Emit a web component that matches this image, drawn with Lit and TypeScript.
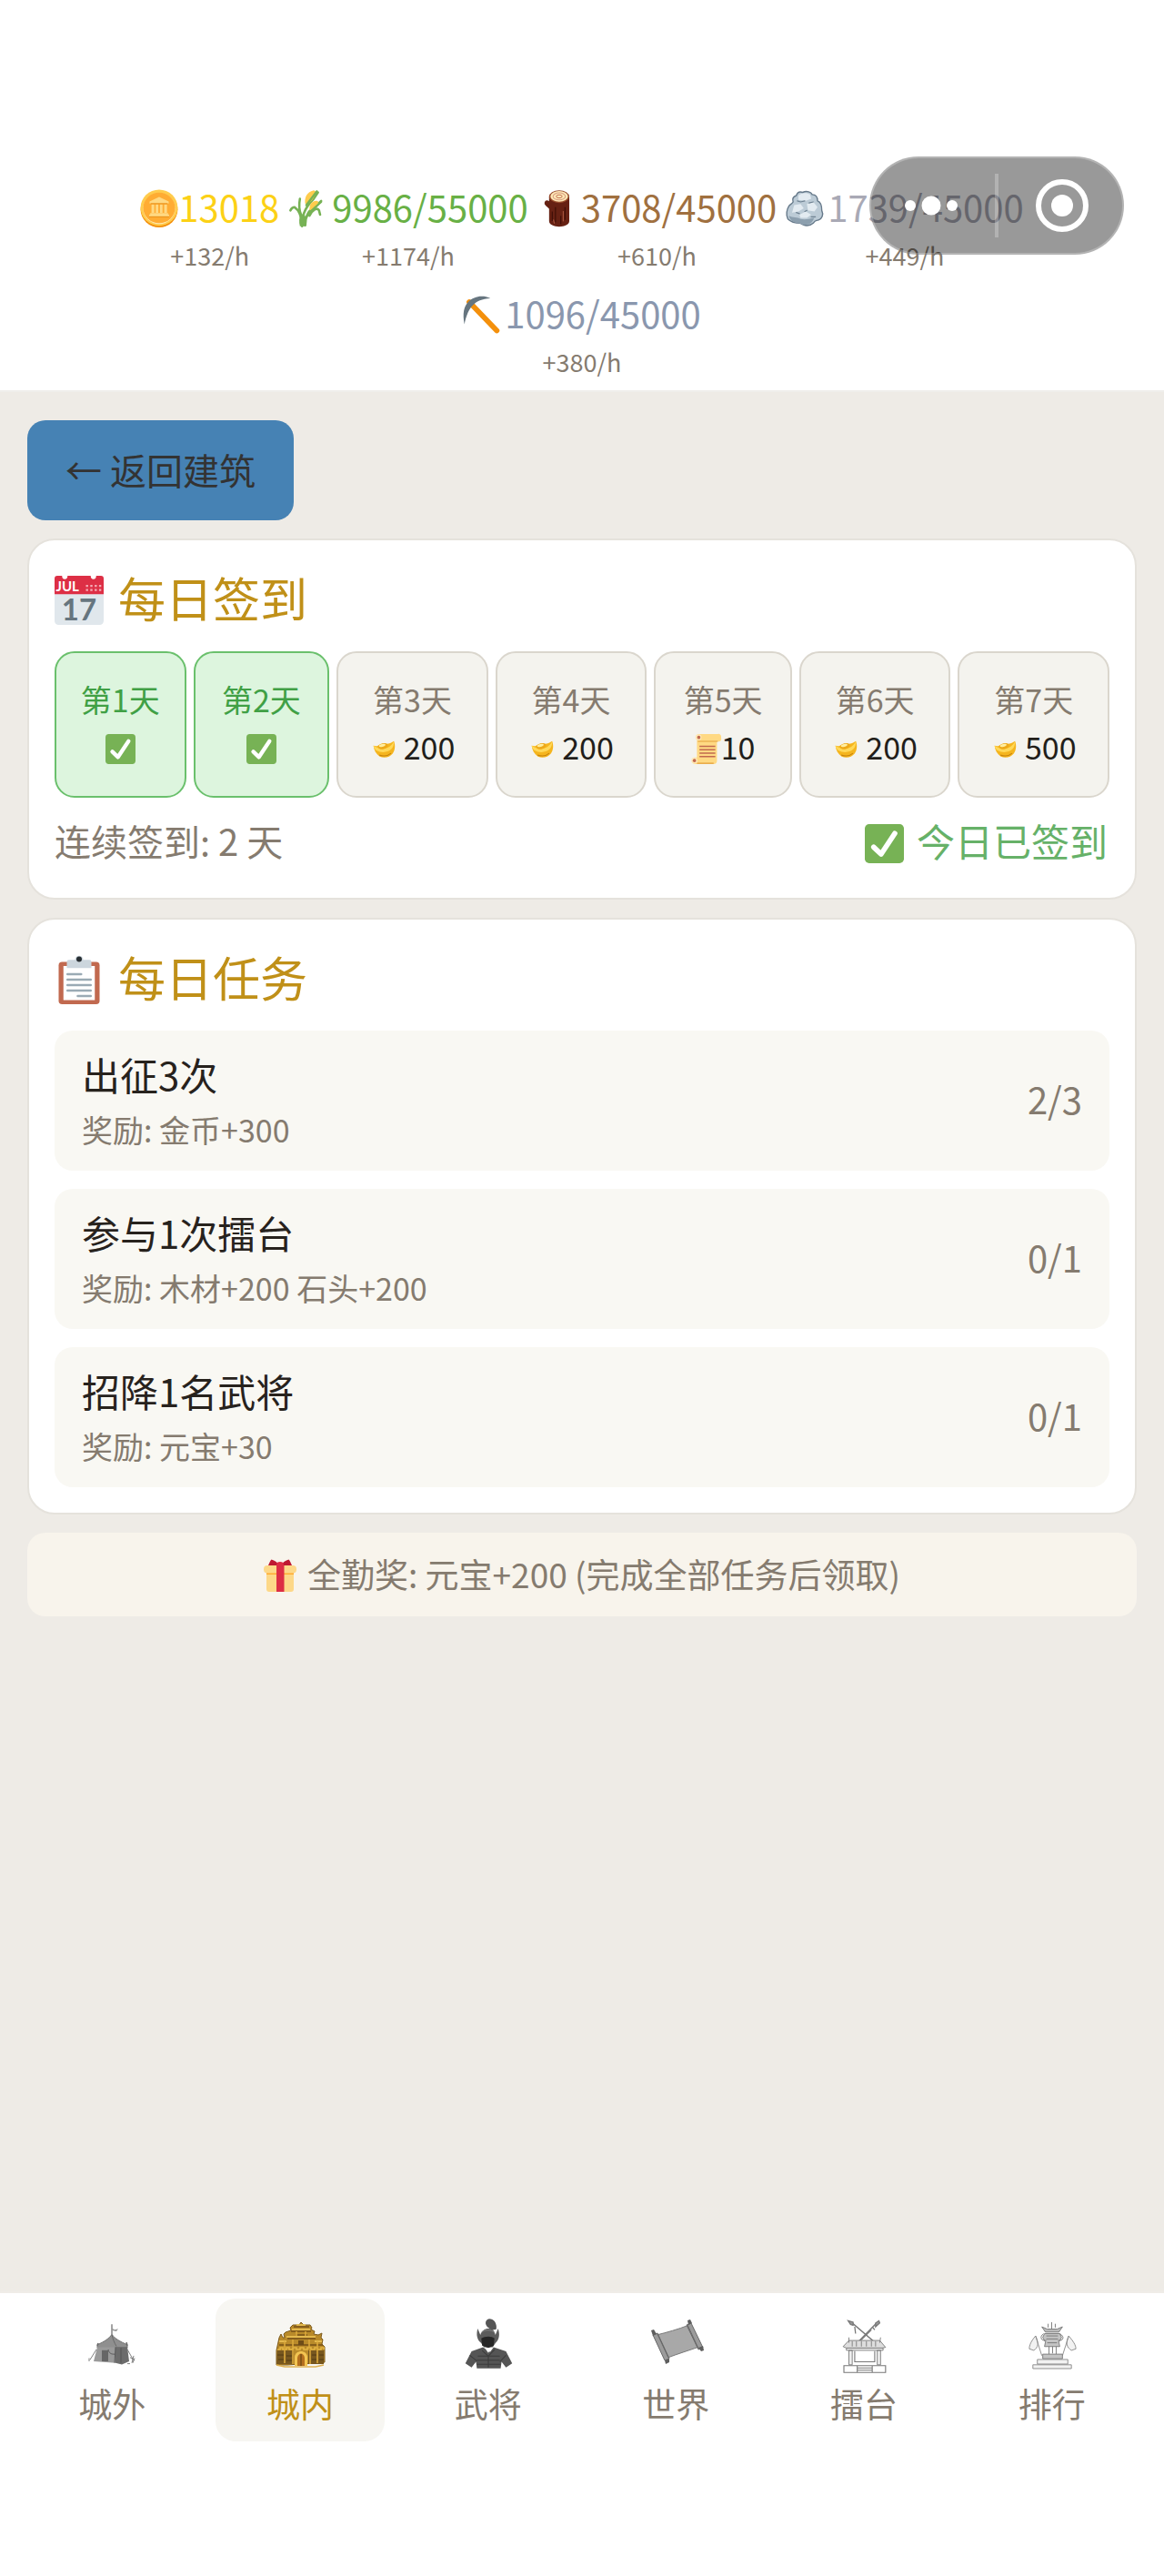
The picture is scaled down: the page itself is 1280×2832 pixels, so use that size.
import { LitElement, css, html, svg, nothing } from 'lit';
import { customElement, property, state } from 'lit/decorators.js';
import { classMap } from 'lit/directives/class-map.js';

const check = svg`
  <rect width="36" height="36" rx="4" fill="#77b255" />
  <path d="M8.2 21.2 15 27.6 27.6 8.6" fill="none" stroke="#fff" stroke-width="4.8" stroke-linecap="round" stroke-linejoin="round" />
`;

const coin = svg`
  <ellipse cx="18" cy="19" rx="17.5" ry="17" fill="#f4900c" />
  <ellipse cx="18" cy="17.4" rx="17.5" ry="17" fill="#ffcc4d" />
  <ellipse cx="18" cy="18.2" rx="15" ry="14.6" fill="#ffe8b6" />
  <ellipse cx="18" cy="17.6" rx="15" ry="14.4" fill="#ffac33" />
  <path d="M18 7.2 9 11.6v1.8h18v-1.8zM10.8 14.3h2.6v8h-2.6zm4 0h2.4v8h-2.4zm4 0h2.4v8h-2.4zm4 0h2.6v8h-2.6zM9.6 22.4h16.8v1.4h1v2.2H8.6v-2.2h1z" fill="#ffd983" />
  <path d="M8.6 26h18.8M10 13.6h16" stroke="#e58a12" stroke-width=".8" />
`;

const wheat = svg`
  <path d="M13 35c0-8 1-16 11-26l4-6M16 34c0-9 4-15 10-18l5-5M13 32c-1-9-4-13-7-15-2 0-3 1-4 3M12 24c-2-5-2-10-1-15M20 25c3-6 7-8 9-5l1 4" fill="none" stroke="#77b255" stroke-width="2.2" stroke-linecap="round" />
  <path d="M16 14c-1-6 1-11 8-13 3 1 2 3 1 5-2 4-4 7-9 8z" fill="#ffcc4d" />
  <path d="M20 20c0-5 1-8 6-9 3 0 3 2 1 4-1 3-4 4-7 5z" fill="#ffcc4d" />
  <path d="m17 15 10-13M21 21l10-9" fill="none" stroke="#77b255" stroke-width="2" stroke-linecap="round" />
  <path d="M11 35c-1-4-1-8 1-12l5 3c-1 3-1 6-1 9z" fill="#77b255" />
`;

const log = svg`
  <path d="M12 18 8.4 14.6c-1.6-1.4-.6-3.2.8-3 1.8.2 2 2.4 3.8 4.4z" fill="#662113" stroke="#662113" stroke-width="2" stroke-linejoin="round" />
  <path d="M11 7v23c0 7 19 7 19 0V7z" fill="#662113" />
  <path d="M14 21v9M17 17v14M22 25v8M26 17v12" stroke="#3f0f07" stroke-width="1" />
  <path d="M24.3 21v9M15.2 29l.6 3" stroke="#c1694f" stroke-width=".7" stroke-linecap="round" />
  <ellipse cx="20.5" cy="7" rx="9.5" ry="6" fill="#974b2c" />
  <ellipse cx="20.5" cy="6.8" rx="8.3" ry="5" fill="#ffe8b6" />
  <ellipse cx="20.5" cy="6.8" rx="5.8" ry="3.3" fill="none" stroke="#d99e82" stroke-width=".9" />
  <ellipse cx="20.5" cy="6.8" rx="2.8" ry="1.5" fill="none" stroke="#c1694f" stroke-width=".8" />
`;

const stone = svg`
  <path d="M10 6c1-3 3-4 6-3 4-2 8 0 9 2 4 0 5 3 5 6 3 1 4 5 4 9 2 4 0 8-3 9-3 1-3 0-5 3-3 3-9 3-12 0-5 0-9-1-12-4-2-4-1-9 1-12 1-2 3-2 4-4-1-3 0-5 3-6z" fill="#bccbd6" stroke="#66798a" stroke-width="1.2" stroke-linejoin="round" />
  <path d="M12 6c3-3 8-3 11-1l1 4-5 2-7-1zM8 15l6-1 3 4-5 3-6 1zM20 14l6-2 4 5-3 4-6-1zM13 24l6-3 5 3-4 3-6 0z" fill="#e3ebf1" />
  <path d="M3 25c4 2 8 1 11 3 4 1 8 0 13-1-2 4-3 5-5 6-4 1-7 1-9-1-4 0-9-2-10-7z" fill="#8c9fae" />
  <path d="m11 11 3 1 4-1M26 12l-4 1M10 22l3 1M20 20l-2 1M24 26l4 0" fill="none" stroke="#6f8292" stroke-width="1" stroke-linecap="round" />
`;

const pickaxe = svg`
  <path d="m6 6 26 27" stroke="#f4900c" stroke-width="5" stroke-linecap="round" />
  <path d="M1.5 27C-.5 17 1 10 5 6 10 1 18-1 26 2.5 18 3 13 5 9.5 9 6 12 3 19 1.5 27z" fill="#66757f" />
`;

const calendar = svg`
  <path d="M0 10h36v23a3 3 0 0 1-3 3H3a3 3 0 0 1-3-3z" fill="#e0e7ec" />
  <path d="M2 0h3.5a2 2.5 0 0 0 4 0h17a2 2.5 0 0 0 4 0H34a2 2 0 0 1 2 2v11.5H0V2a2 2 0 0 1 2-2z" fill="#dd2f45" />
  <text x="1" y="11.4" font-size="10" font-weight="700" font-family="Lato, sans-serif" fill="#fff">JUL</text>
  <path d="M23 7.4h12M23 10.4h12" stroke="#f5abb5" stroke-width="1.6" stroke-dasharray="1.6 1.6" />
  <text x="18" y="32.4" text-anchor="middle" font-size="22" font-weight="700" font-family="Lato, sans-serif" fill="#66757f">17</text>
`;

const clipboard = svg`
  <rect x="3" y="5" width="30" height="31" rx="2.5" fill="#c1694f" />
  <path d="M6.500 8h23v25h-23z" fill="#fff" />
  <path d="M9 5a1.500 1.500 0 0 1 1.500-1.500H15a3 3 0 0 1 6 0h4.500A1.500 1.500 0 0 1 27 5v4.500H9z" fill="#ccd6dd" />
  <circle cx="18" cy="3" r="2" fill="#292f33" />
  <path d="M9.500 14h10M9.500 18h17M9.500 22h17M9.500 26h17M17 30h9.500" stroke="#9aaab4" stroke-width="1.700" stroke-linecap="round" />
`;

const scroll = svg`
  <path d="M32 0H8a3.500 3.500 0 0 0-1 2v26H4a4 4 0 0 0-3 4 4 4 0 0 0 4 4h22a4 4 0 0 0 4-4V9h2a3 3 0 0 0 3-4V3a3 3 0 0 0-4-3z" fill="#ffd983" />
  <path d="M8 8.800h24M7 35h20" stroke="#e39f3d" stroke-width="1.200" />
  <circle cx="8.800" cy="4" r="3.600" fill="#ffe8b6" />
  <circle cx="4" cy="31.800" r="3.600" fill="#ffe8b6" />
  <circle cx="9.200" cy="4" r="2" fill="#c1694f" />
  <circle cx="4" cy="31.800" r="2" fill="#c1694f" />
  <path d="M10 14.800h19M10 18.800h19M10 23h19M10 27h19" stroke="#c1694f" stroke-width="1.700" />
`;

const gift = svg`
  <path d="M3 14h30v19a3 3 0 0 1-3 3H6a3 3 0 0 1-3-3z" fill="#fdd888" />
  <path d="M3 15h30v2H3z" fill="#ffac33" />
  <rect y="7" width="36" height="8.500" rx="4" fill="#fdd888" />
  <path d="M14 5h8.500v31H14z" fill="#dd2e44" />
  <path d="M17 7c-2-4-5-5.500-8.500-6.500C7 2 6 4.500 5 7zM19 7c2-4 5-5.500 8.500-6.500C29 2 30 4.500 31 7z" fill="#be1931" />
  <ellipse cx="18" cy="6" rx="4" ry="3" fill="#dd2e44" />
`;

// the gold ingot only fills the middle of its box
const ingot = svg`
  <path d="M4 14c2 .5 3 .7 5 .3 2-2 7-3.500 11-2.600 2.500 0 5.500-1 8.500-3.200 2 5 1.500 11-1.500 15-3.500 4.500-10 6-15.500 3.500C7 24 4.500 19 4 14z" fill="#f5b51e" />
  <path d="M4 14c5 3 8 4 12 3.600 5-.8 9.500-3 12.500-9 .5 3-1 7.500-3 9.500-4 4-12 5-18 1.500-2-1-3-3-3.500-5.600z" fill="#ffd858" />
  <ellipse cx="15.500" cy="14.600" rx="6" ry="3.400" transform="rotate(-14 15.500 14.600)" fill="#eea918" />
  <ellipse cx="14.500" cy="13.600" rx="4" ry="1.700" transform="rotate(-14 14.500 13.600)" fill="#ffed9e" />
  <path d="M11 25c5 2 10 1.500 14-2" fill="none" stroke="#c8830c" stroke-width="1.200" />
`;

const tent = svg`
  <path d="M33 11v13" stroke="#666" stroke-width="1.2" />
  <path d="m33 16 3 2 4-1-2 3-5-1z" fill="#999" />
  <path d="M33 24c-3 5-8 9-16 13v4h33v-4c-8-4-14-8-17-13z" fill="#8f8f8f" stroke="#6b6b6b" />
  <path d="m17 38 1-3M50 38l-1-4" stroke="#666" stroke-width="1.5" />
  <path d="M17 40h21l-1 20-24-2z" fill="#9a9a9a" />
  <path d="M37 40h13l2 18-8 4-7-2z" fill="#6c6c6c" />
  <path d="M33 24c1 6 3 11 5 15" fill="none" stroke="#666" />
  <path d="M22 44h7v14h-7z" fill="#666" />
  <path d="M29 43c1 5 3 6 7 6M37 40l-1 20M43 41v19" fill="none" stroke="#555" />
  <path d="m16 43-7 13M50 43l6 12M8 54v4M53 53l5 4M55 60l2-9M50 61h3M58 54l-2 6" stroke="#777" />
`;

const fortress = svg`
  <path d="M7 57V41l3-14 2-4 2 4h2l-1-4 2-2 6-2-1-3 3-3h7l2-3 3 3h7l2 3-1 2 4 2-1 3 5 1 4-2-1 5 2 2-1 5 3 3v17l-8 1-18 1-15 1z" fill="#b98a2a" stroke="#7d5a1c" />
  <path d="M8 41h18v15H7zM42 41h17v15H42z" fill="#77571f" />
  <path d="M23 20h22M19 28h31M26 15h17M10 35h48M28 24h13" stroke="#765019" stroke-width="1.3" />
  <path d="M24 18h20M18 26h32M29 13h10M10 31h8M49 31h8" stroke="#f2c95a" stroke-width="1.5" />
  <path d="M8 40h3v-2h3v2h4v-2h3v2h4v-2h4v2h4v-2h4v2h4v-2h4v2h4v-2h3v2h4v-2h3v2" fill="none" stroke="#e3b443" stroke-width="1.6" />
  <path d="M25 40v16M44 40v16M16 31v24M52 31v24M25 29v8M43 29v8M29 20v5M39 20v5" stroke="#dba93b" stroke-width="1.6" />
  <path d="M31 30h6v5h-6z" fill="#6e4c17" />
  <path d="M27 58V48c1-8 13-8 14 0v10z" fill="#f3c552" />
  <path d="M30 58V49c1-6 7-6 8 0v9z" fill="#b5701f" />
  <path d="M34 45v13M8 46h7M9 51h6M18 47h6M18 52h6M46 46h5M46 51h5M54 46h5M54 51h5" stroke="#4f3812" stroke-width=".9" />
  <path d="m7 57 9 2 18 0 16 0 9-2" fill="none" stroke="#e0b354" stroke-width="1.6" />
`;

const general = svg`
  <path d="M33 17c-3-3-3-9 2-10 5 0 9 5 8 13l-5 1z" fill="#555" />
  <path d="M22 19c-2 7-1 14 4 18l3 5h10l3-5c5-5 5-12 3-18l-3 8c-1-6-4-8-8-8s-8 3-9 8z" fill="#5c5c5c" />
  <path d="M26 31c4-3 12-3 15 0l-1 9-6 3-7-3z" fill="#262626" />
  <path d="M28 42 15 47 8 62l7 5 5-7 1 8h27l1-8 5 7 7-5-7-15-14-5-4 6z" fill="#555" />
  <path d="m30 43 4 6 3-6z" fill="#fff" />
  <path d="M22 53h25M21 58h26M21 63h27M27 46l7 7 7-8M34 52v15M13 52l8 7M54 52l-7 8" fill="none" stroke="#3c3c3c" stroke-width="1.2" />
  <path d="M26 24c3-4 12-4 15 0" fill="none" stroke="#888" />
`;

const map = svg`
  <path d="M12 24c12-3 23-6 36-11l11 24c-12 4-24 8-35 12z" fill="#a8a8a8" stroke="#7a7a7a" />
  <path d="m8 24 5-2 13 28-5 2zM45 13l5-2 13 27-5 2z" fill="#9b9b9b" stroke="#686868" stroke-linejoin="round" />
  <path d="m13 23 12 26M46 13l12 26" stroke="#666" />
  <path d="m6 19 3-1 3 5-4 2zM21 52l5-2 0 4-4 2zM46 8l3-1 2 4-4 2zM58 38l5-2 1 5-3 1z" fill="#5e5e5e" />
`;

const arena = svg`
  <path d="m20 8 34 32M53 8 28 36" stroke="#777" stroke-width="1.6" />
  <path d="m17 7 6 2v4l-3-1zM50 10l4-3 1 3-5 5zM25 15l1 9M46 15l3 4M32 33l13-14" stroke="#777" stroke-width="1.4" fill="#999" />
  <path d="M18 33h37l7 9-4 1H15l-4-2z" fill="#ddd" stroke="#777" />
  <path d="M18 36v-7M55 36l1-7M22 34v7M27 34v7M33 34v7M39 34v7M45 34v7M50 34v7" stroke="#777" />
  <path d="M15 43h44v3H15zM18 46h4v19h-4zM52 46h4v19h-4z" fill="#eee" stroke="#777" />
  <path d="M25 47v14h24V47M12 66h50v9H12zM28 66v9M46 66v9M28 69h18M28 72h18" fill="none" stroke="#777" stroke-width="1.2" />
`;

const statue = svg`
  <path d="M32 8v9M28 10v5M36 10v5M21 14l6 3h11l6-3-4 7H25z" fill="#bbb" stroke="#777" />
  <path d="M24 23h17l2 5-3 6 1 6H24l1-6-3-6z" fill="#c4c4c4" stroke="#777" />
  <path d="M23 23c-5 4-3 10 3 9M41 23c6 4 4 10-2 9M26 26h13M26 30h13M27 35h11M29 40v10M37 40v10M33 40v9" fill="none" stroke="#777" />
  <path d="M14 26c-5 7-7 12-7 17l5 2c5-4 6-9 2-19zl7 26M51 26c5 7 8 12 8 17l-5 2c-5-4-7-9-3-19zl-7 26" fill="#f2f2f2" stroke="#888" />
  <path d="M22 50h22v6H22z" fill="#c4c4c4" stroke="#777" />
  <path d="M16 57h34v6H16zM11 64h43v5H11z" fill="#f2f2f2" stroke="#888" />
`;

const emoji: Record<string, unknown> = {
  check, coin, wheat, log, stone, pickaxe, calendar, clipboard, scroll, gift, ingot,
};

const pictures: Record<string, unknown> = { tent, fortress, general, map, arena, statue };

@customElement('emoji-icon')
export class EmojiIcon extends LitElement {
  @property() name = '';

  static styles = css`
    :host {
      display: inline-flex;
      flex: none;
    }

    svg {
      width: 100%;
      height: 100%;
      overflow: visible;
    }
  `;

  render() {
    return html`<svg viewBox="0 0 36 36" aria-hidden="true">${emoji[this.name]}</svg>`;
  }
}

@customElement('resource-bar')
export class ResourceBar extends LitElement {
  private resources = [
    { id: 'gold', icon: 'coin', value: '13018', rate: '+132/h' },
    { id: 'food', icon: 'wheat', value: '9986/55000', rate: '+1174/h' },
    { id: 'wood', icon: 'log', value: '3708/45000', rate: '+610/h' },
    { id: 'rock', icon: 'stone', value: '1739/45000', rate: '+449/h' },
    { id: 'iron', icon: 'pickaxe', value: '1096/45000', rate: '+380/h' },
  ];

  static styles = css`
    :host {
      display: block;
      position: relative;
      padding: 197px 120px 7px;
      border-bottom: 2px solid #efeeeb;
      background: #ffffff;
    }

    .list {
      display: flex;
      flex-wrap: wrap;
      justify-content: center;
      gap: 9px 10px;
      margin: 0;
      padding: 0;
      list-style: none;
    }

    .item {
      text-align: center;
    }

    .value {
      display: flex;
      align-items: center;
      justify-content: center;
      font-size: 40px;
      line-height: 60px;
    }

    emoji-icon {
      width: 42px;
      height: 42px;
      margin-top: 4px;
    }

    .food emoji-icon,
    .wood emoji-icon {
      margin-right: 6px;
    }

    .rock emoji-icon,
    .iron emoji-icon {
      margin-right: 4px;
    }

    .rate {
      color: #857b6f;
      font-size: 27px;
      line-height: 48px;
    }

    .gold .value {
      color: #fcd116;
    }

    .food .value {
      color: #68b045;
    }

    .wood .value {
      color: #a0703f;
    }

    .rock .value {
      color: #a9a9b5;
    }

    .iron .value {
      color: #8a97ae;
    }

    .capsule {
      position: absolute;
      top: 172px;
      right: 44px;
      display: flex;
      align-items: center;
      box-sizing: border-box;
      width: 280px;
      height: 108px;
      border: 2px solid rgba(255, 255, 255, 0.25);
      border-radius: 54px;
      background: rgba(0, 0, 0, 0.4);
    }

    .capsule button {
      display: flex;
      flex: 1;
      align-items: center;
      justify-content: center;
      height: 100%;
      padding: 0;
      border: 0;
      background: none;
      cursor: pointer;
    }

    .capsule .more {
      padding-right: 4px;
    }

    .capsule .close {
      padding-left: 4px;
    }

    .capsule svg {
      width: 60px;
      height: 60px;
      fill: #ffffff;
    }

    .divider {
      width: 4px;
      height: 70px;
      background: rgba(255, 255, 255, 0.25);
    }
  `;

  render() {
    return html`
      <ul class="list">
        ${this.resources.map(
          (item) => html`
            <li class="item ${item.id}">
              <div class="value"><emoji-icon name=${item.icon}></emoji-icon>${item.value}</div>
              <div class="rate">${item.rate}</div>
            </li>
          `,
        )}
      </ul>
      <div class="capsule">
        <button class="more" type="button" aria-label="更多">
          <svg viewBox="0 0 60 60">
            <circle cx="7" cy="30" r="6" />
            <circle cx="30" cy="30" r="10.5" />
            <circle cx="53" cy="30" r="6" />
          </svg>
        </button>
        <span class="divider"></span>
        <button class="close" type="button" aria-label="关闭">
          <svg viewBox="0 0 60 60">
            <circle cx="30" cy="30" r="26" fill="none" stroke="#fff" stroke-width="6" />
            <circle cx="30" cy="30" r="12" />
          </svg>
        </button>
      </div>
    `;
  }
}

// shared by the two white cards
const cardStyles = css`
  :host {
    display: block;
    padding: 28px;
    border: 2px solid #e5e2dc;
    border-radius: 30px;
    background: #ffffff;
  }

  h2 {
    display: flex;
    align-items: center;
    gap: 16px;
    margin: 0 0 24px;
    color: #c09018;
    font-size: 52px;
    font-weight: 400;
    line-height: 70px;
  }

  h2 emoji-icon {
    width: 54px;
    height: 54px;
    margin-top: 6px;
  }
`;

@customElement('sign-in-card')
export class SignInCard extends LitElement {
  private days = [
    { label: '第1天', done: true },
    { label: '第2天', done: true },
    { label: '第3天', icon: 'ingot', amount: 200 },
    { label: '第4天', icon: 'ingot', amount: 200 },
    { label: '第5天', icon: 'scroll', amount: 10 },
    { label: '第6天', icon: 'ingot', amount: 200 },
    { label: '第7天', icon: 'ingot', amount: 500 },
  ];

  static styles = [
    cardStyles,
    css`
      .days {
        display: grid;
        grid-template-columns: 145fr 150fr 167fr 167fr 152fr 167fr 167fr;
        gap: 8px;
        margin: 0;
        padding: 0;
        list-style: none;
      }

      .day {
        padding: 26px 0 27px;
        border: 2px solid #dad6cd;
        border-radius: 22px;
        background: #f4f3ee;
        color: #857b6f;
        font-size: 34px;
        line-height: 50px;
        text-align: center;
      }

      .done {
        border-color: #6ac06c;
        background: #ddf5de;
        color: #40a045;
      }

      .reward {
        display: flex;
        align-items: center;
        justify-content: center;
        color: #221e1a;
        line-height: 54px;
        min-height: 54px;
      }

      .reward emoji-icon {
        width: 33px;
        height: 33px;
        margin-top: 4px;
      }

      .ingot emoji-icon {
        margin-right: 4px;
      }

      .footer {
        display: flex;
        justify-content: space-between;
        margin-top: 12px;
        color: #857b6f;
        font-size: 40px;
        line-height: 70px;
      }

      .signed {
        display: flex;
        align-items: center;
        gap: 14px;
        padding-right: 2px;
        color: #66b168;
        font-size: 42px;
      }

      .signed emoji-icon {
        width: 43px;
        height: 43px;
        margin-top: 6px;
      }
    `,
  ];

  render() {
    return html`
      <h2><emoji-icon name="calendar"></emoji-icon>每日签到</h2>
      <ol class="days">
        ${this.days.map(
          (day) => html`
            <li class=${classMap({ day: true, done: !!day.done })}>
              <div>${day.label}</div>
              <div class="reward ${day.icon ?? ''}">
                <emoji-icon name=${day.icon ?? 'check'}></emoji-icon>${day.amount ?? nothing}
              </div>
            </li>
          `,
        )}
      </ol>
      <div class="footer">
        <span>连续签到: 2 天</span>
        <span class="signed"><emoji-icon name="check"></emoji-icon>今日已签到</span>
      </div>
    `;
  }
}

@customElement('task-card')
export class TaskCard extends LitElement {
  private tasks = [
    { name: '出征3次', reward: '奖励: 金币+300', progress: '2/3' },
    { name: '参与1次擂台', reward: '奖励: 木材+200 石头+200', progress: '0/1' },
    { name: '招降1名武将', reward: '奖励: 元宝+30', progress: '0/1' },
  ];

  static styles = [
    cardStyles,
    css`
      .tasks {
        display: flex;
        flex-direction: column;
        gap: 20px;
        margin: 0;
        padding: 0;
        list-style: none;
      }

      .task {
        display: flex;
        align-items: center;
        justify-content: space-between;
        padding: 16px 30px;
        border-radius: 20px;
        background: #f9f8f3;
        color: #857b6f;
      }

      .name {
        color: #27221d;
        font-size: 42px;
        line-height: 64px;
      }

      .reward {
        font-size: 34px;
        line-height: 58px;
      }

      .progress {
        font-size: 40px;
        line-height: 60px;
        padding-bottom: 4px;
      }
    `,
  ];

  render() {
    return html`
      <h2><emoji-icon name="clipboard"></emoji-icon>每日任务</h2>
      <ul class="tasks">
        ${this.tasks.map(
          (task) => html`
            <li class="task">
              <div>
                <div class="name">${task.name}</div>
                <div class="reward">${task.reward}</div>
              </div>
              <span class="progress">${task.progress}</span>
            </li>
          `,
        )}
      </ul>
    `;
  }
}

@customElement('tab-bar')
export class TabBar extends LitElement {
  @state() private active = 'inner';

  private tabs = [
    { id: 'outer', label: '城外', picture: 'tent', box: '0 -3 66 76' },
    { id: 'inner', label: '城内', picture: 'fortress', box: '0 0 66 66' },
    { id: 'generals', label: '武将', picture: 'general', box: '0 0 68 74' },
    { id: 'world', label: '世界', picture: 'map', box: '0 0 66 66' },
    { id: 'arena', label: '擂台', picture: 'arena', box: '0 -3 72 79' },
    { id: 'ranking', label: '排行', picture: 'statue', box: '-1 -4 67 79' },
  ];

  static styles = css`
    :host {
      display: block;
      padding: 6px 30px 148px;
      border-top: 2px solid #efece8;
      background: #ffffff;
    }

    nav {
      display: flex;
      gap: 20px;
    }

    a {
      display: flex;
      flex: 1;
      flex-direction: column;
      align-items: center;
      gap: 4px;
      padding: 16px 0 13px;
      border-radius: 22px;
      color: #857b6f;
      font-size: 37px;
      line-height: 58px;
      text-decoration: none;
    }

    .active {
      background: #f7f6f2;
      color: #c09018;
    }

    svg {
      width: 66px;
      height: 66px;
      fill: none;
    }
  `;

  render() {
    return html`
      <nav>
        ${this.tabs.map(
          (tab) => html`
            <a
              href="#${tab.id}"
              class=${classMap({ active: tab.id === this.active })}
              aria-current=${tab.id === this.active ? 'page' : nothing}
              @click=${() => this.select(tab.id)}
            >
              <svg viewBox=${tab.box} preserveAspectRatio="none" aria-hidden="true">
                ${pictures[tab.picture]}
              </svg>
              ${tab.label}
            </a>
          `,
        )}
      </nav>
    `;
  }

  select(id: string) {
    this.active = id;
  }
}

@customElement('app-root')
export class AppRoot extends LitElement {
  static styles = css`
    :host {
      display: flex;
      flex-direction: column;
      min-height: 100vh;
      background: #eeebe6;
      font-family: 'Noto Sans CJK SC', 'Noto Sans', sans-serif;
    }

    main {
      display: flex;
      flex: 1;
      flex-direction: column;
      gap: 20px;
      padding: 31px 30px;
    }

    .back {
      align-self: flex-start;
      padding: 24px 42px 26px;
      border: 0;
      border-radius: 20px;
      background: #4682b4;
      color: #333333;
      font: inherit;
      font-size: 40px;
      line-height: 60px;
      cursor: pointer;
    }

    .bonus {
      display: flex;
      align-items: center;
      justify-content: center;
      gap: 12px;
      padding: 15px 16px 17px;
      border-radius: 20px;
      background: #f8f4ec;
      color: #857b6f;
      font-size: 37px;
      line-height: 60px;
    }

    .bonus emoji-icon {
      width: 36px;
      height: 36px;
      margin-top: 4px;
    }
  `;

  render() {
    return html`
      <resource-bar></resource-bar>
      <main>
        <button class="back" type="button">← 返回建筑</button>
        <sign-in-card></sign-in-card>
        <task-card></task-card>
        <div class="bonus">
          <emoji-icon name="gift"></emoji-icon>
          全勤奖: 元宝+200 (完成全部任务后领取)
        </div>
      </main>
      <tab-bar></tab-bar>
    `;
  }
}
